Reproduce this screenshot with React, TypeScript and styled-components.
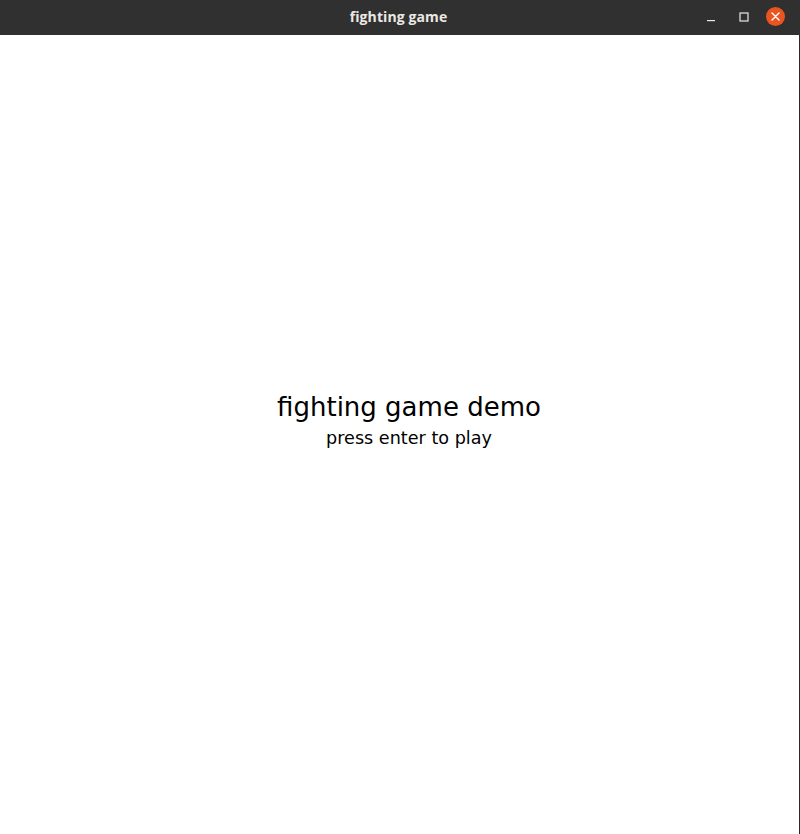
import React from "react";
import styled, { createGlobalStyle } from "styled-components";

const Global = createGlobalStyle`
  html, body { margin: 0; padding: 0; background: #ffffff; }
  body { width: 800px; height: 834px; overflow: hidden; }
`;

const Window = styled.div`
  width: 800px;
  height: 834px;
  display: flex;
  flex-direction: column;
  background: #ffffff;
`;

const TitleBar = styled.div`
  height: 35px;
  flex: none;
  background: #303030;
  position: relative;
  display: flex;
  align-items: center;
  justify-content: center;
`;

const Title = styled.div`
  font-family: "Open Sans", "DejaVu Sans", sans-serif;
  font-weight: 700;
  font-size: 14px;
  color: #ebe8e3;
  letter-spacing: 0.1px;
  margin-top: -2px;
  margin-left: -3px;
`;

const Controls = styled.div`
  position: absolute;
  right: 10px;
  top: 0;
  height: 33px;
  display: flex;
  align-items: center;
`;

const ControlButton = styled.div<{ $w?: number }>`
  width: ${(p) => p.$w ?? 33}px;
  height: 33px;
  display: flex;
  align-items: center;
  justify-content: center;
`;

const Close = styled.div`
  width: 19px;
  height: 19px;
  border-radius: 50%;
  background: #e95420;
  display: flex;
  align-items: center;
  justify-content: center;
`;

const Content = styled.div`
  flex: 1;
  border-right: 1px solid #2a2a2a;
  display: flex;
  flex-direction: column;
  align-items: center;
  padding-top: 357px;
  padding-left: 19px;
  box-sizing: border-box;
`;

const Heading = styled.div`
  font-family: "DejaVu Sans", sans-serif;
  font-size: 26px;
  line-height: 30px;
  color: #000000;
`;

const Sub = styled.div`
  font-family: "DejaVu Sans", sans-serif;
  font-size: 17.6px;
  line-height: 22px;
  color: #000000;
  margin-top: 5px;
`;

export default function App() {
  return (
    <>
      <Global />
      <Window>
        <TitleBar>
          <Title>fighting game</Title>
          <Controls>
            <ControlButton>
              <svg width="10" height="10" viewBox="0 0 10 10">
                <rect x="1" y="8" width="8" height="1.2" fill="#e8e8e8" />
              </svg>
            </ControlButton>
            <ControlButton>
              <svg width="10" height="10" viewBox="0 0 10 10">
                <rect x="1" y="1" width="8" height="8" fill="none" stroke="#e8e8e8" strokeWidth="1.2" />
              </svg>
            </ControlButton>
            <ControlButton $w={30}>
              <Close>
                <svg width="9" height="9" viewBox="0 0 9 9">
                  <path d="M1 1 L8 8 M8 1 L1 8" stroke="#ffffff" strokeWidth="1.4" strokeLinecap="round" />
                </svg>
              </Close>
            </ControlButton>
          </Controls>
        </TitleBar>
        <Content>
          <Heading>fighting game demo</Heading>
          <Sub>press enter to play</Sub>
        </Content>
      </Window>
    </>
  );
}
